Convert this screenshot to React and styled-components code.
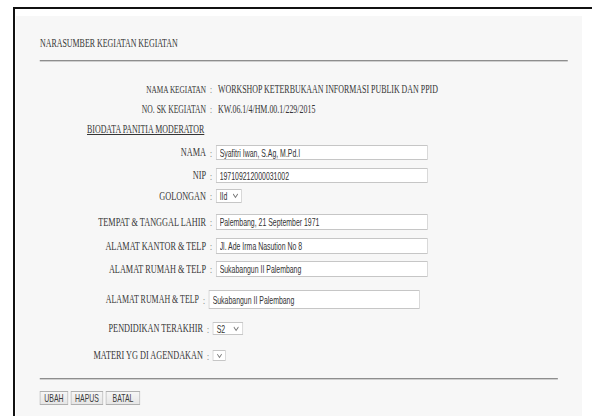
import React from "react";
import styled, { createGlobalStyle } from "styled-components";

// the whole form is drawn narrow: laid out wide, then squeezed horizontally
const SQUEEZE = 0.66;
const u = (px) => px / SQUEEZE;

const GlobalStyle = createGlobalStyle`
  html, body {
    margin: 0;
    padding: 0;
    background: #fff;
    overflow: hidden;
  }
  body {
    font-family: "Liberation Serif", "Times New Roman", serif;
    color: #353535;
  }
`;

const Frame = styled.div`
  margin: 7px 0 0 13px;
  border-top: 2px solid #111;
  border-left: 2px solid #111;
  padding: 7px 0 0 1px;
  height: 400px;
`;

const Panel = styled.div`
  width: 566px;
  height: 100%;
  background: #f7f7f7;
  overflow: hidden;
`;

const Content = styled.div`
  width: ${u(566)}px;
  transform: scaleX(${SQUEEZE});
  transform-origin: 0 0;
  display: flex;
  flex-direction: column;
`;

const Title = styled.div`
  margin: 20px 0 0 ${u(24)}px;
  font-size: 12px;
  line-height: 14px;
  white-space: nowrap;
`;

const Rule = styled.div`
  margin: ${(p) => p.$mt}px 0 0 ${u(24)}px;
  width: ${(p) => u(p.$w)}px;
  height: 0;
  border-top: 1px solid #8e8e8e;
  border-bottom: 1px solid #cfcfcf;
`;

const Row = styled.div`
  display: flex;
  align-items: center;
  height: ${(p) => p.$h}px;
  margin-top: ${(p) => p.$mt}px;
`;

const Label = styled.div`
  flex-shrink: 0;
  width: ${(p) => u(190 - (p.$shift || 0))}px;
  text-align: right;
  font-size: ${(p) => p.$size || 12.5}px;
  white-space: nowrap;
  color: #383838;
`;

const Colon = styled.span`
  flex-shrink: 0;
  width: ${u(10)}px;
  text-align: center;
  font-size: 11px;
  color: #777;
`;

const Value = styled.span`
  padding-left: ${u(2)}px;
  font-size: 12px;
  white-space: nowrap;
`;

const Section = styled.div`
  margin-left: ${u(71)}px;
  font-size: 12px;
  text-decoration: underline;
  white-space: nowrap;
`;

const Field = styled.input`
  box-sizing: border-box;
  width: ${(p) => u(p.$w)}px;
  height: 100%;
  margin: 0;
  padding: 0 ${u(3)}px;
  border: 1px solid #c6c6c6;
  border-left-width: 1.5px;
  border-right-width: 1.5px;
  background: #fff;
  font-family: "Liberation Sans", Arial, sans-serif;
  font-size: 10.5px;
  color: #333;
  outline: none;
`;

const Select = styled.div`
  box-sizing: border-box;
  display: flex;
  align-items: center;
  justify-content: space-between;
  width: ${(p) => u(p.$w)}px;
  height: 100%;
  padding: 0 ${u(3)}px;
  border: 1px solid #c6c6c6;
  border-left-width: 1.5px;
  border-right-width: 1.5px;
  background: #fff;
  font-family: "Liberation Sans", Arial, sans-serif;
  font-size: 10.5px;
  color: #333;
`;

const Chevron = () => (
  <svg width="9" height="6" viewBox="0 0 9 6">
    <polyline points="1,1 4.5,4.5 8,1" fill="none" stroke="#777" strokeWidth="1.1" />
  </svg>
);

const Actions = styled.div`
  display: flex;
  gap: ${u(3)}px;
  margin: 11px 0 0 ${u(24)}px;
`;

const Button = styled.button`
  box-sizing: border-box;
  width: ${(p) => u(p.$w)}px;
  height: 14px;
  padding: 0;
  border: 1px solid #b0b0b0;
  border-left-width: 1.5px;
  border-right-width: 1.5px;
  background: linear-gradient(#f6f6f6, #e6e6e6);
  font-family: "Liberation Sans", Arial, sans-serif;
  font-size: 10.5px;
  color: #3a3a3a;
`;

const fields = [
  { label: "NAMA", value: "Syafitri Iwan, S.Ag, M.Pd.I", mt: 8, h: 15 },
  { label: "NIP", value: "197109212000031002", mt: 8, h: 15 },
];

const address = [
  { label: "TEMPAT & TANGGAL LAHIR", value: "Palembang, 21 September 1971", mt: 11, h: 16 },
  { label: "ALAMAT KANTOR & TELP", value: "Jl. Ade Irma Nasution No 8", mt: 8, h: 16 },
  { label: "ALAMAT RUMAH & TELP", value: "Sukabangun II Palembang", mt: 7, h: 16 },
];

export default function App() {
  return (
    <>
      <GlobalStyle />
      <Frame>
        <Panel>
          <Content>
            <Title>NARASUMBER KEGIATAN KEGIATAN</Title>
            <Rule $mt={10} $w={528} />

            <Row $h={16} $mt={19}>
              <Label $size={11}>NAMA KEGIATAN</Label>
              <Colon>:</Colon>
              <Value>WORKSHOP KETERBUKAAN INFORMASI PUBLIK DAN PPID</Value>
            </Row>
            <Row $h={16} $mt={4}>
              <Label $size={11.5}>NO. SK KEGIATAN</Label>
              <Colon>:</Colon>
              <Value>KW.06.1/4/HM.00.1/229/2015</Value>
            </Row>
            <Row $h={16} $mt={4}>
              <Section>BIODATA PANITIA MODERATOR</Section>
            </Row>

            {fields.map((f) => (
              <Row key={f.label} $h={f.h} $mt={f.mt}>
                <Label>{f.label}</Label>
                <Colon>:</Colon>
                <Field $w={212} defaultValue={f.value} readOnly />
              </Row>
            ))}

            <Row $h={14} $mt={6}>
              <Label>GOLONGAN</Label>
              <Colon>:</Colon>
              <Select $w={26}>
                IId <Chevron />
              </Select>
            </Row>

            {address.map((f) => (
              <Row key={f.label} $h={f.h} $mt={f.mt}>
                <Label>{f.label}</Label>
                <Colon>:</Colon>
                <Field $w={212} defaultValue={f.value} readOnly />
              </Row>
            ))}

            <Row $h={19} $mt={13}>
              <Label $shift={7} $size={12}>ALAMAT RUMAH &amp; TELP</Label>
              <Colon>:</Colon>
              <Field $w={211} defaultValue="Sukabangun II Palembang" readOnly />
            </Row>
            <Row $h={13} $mt={13}>
              <Label $shift={3}>PENDIDIKAN TERAKHIR</Label>
              <Colon>:</Colon>
              <Select $w={30}>
                S2 <Chevron />
              </Select>
            </Row>
            <Row $h={11} $mt={15}>
              <Label $shift={3}>MATERI YG DI AGENDAKAN</Label>
              <Colon>:</Colon>
              <Select $w={13}>
                <Chevron />
              </Select>
            </Row>

            <Rule $mt={17} $w={518} />

            <Actions>
              <Button $w={28}>UBAH</Button>
              <Button $w={32}>HAPUS</Button>
              <Button $w={34}>BATAL</Button>
            </Actions>
          </Content>
        </Panel>
      </Frame>
    </>
  );
}
